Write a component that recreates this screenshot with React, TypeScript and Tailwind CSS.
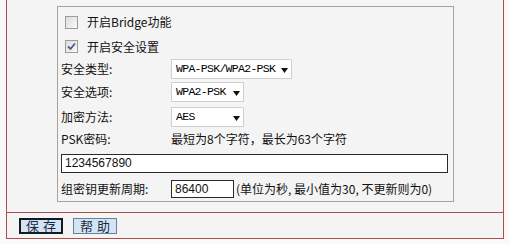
import React from "react";

const cjk = { fontFamily: '"Noto Sans CJK SC", "Noto Sans", sans-serif' };
const mono = { fontFamily: '"Liberation Mono", "DejaVu Sans Mono", monospace' };
const sans = { fontFamily: '"Liberation Sans", Arial, sans-serif' };

function Checkbox({ checked }: { checked?: boolean }) {
  return (
    <div className="w-[13px] h-[13px] border border-[#9c9c9c] bg-gradient-to-br from-[#dcdcdc] to-[#fafafa] flex items-center justify-center shrink-0">
      {checked && (
        <svg width="9" height="9" viewBox="0 0 9 9">
          <path d="M1 4.5 L3.5 7 L8 1.5" stroke="#4a5a8a" strokeWidth="1.8" fill="none" />
        </svg>
      )}
    </div>
  );
}

function Select({ text, width }: { text: string; width: number }) {
  return (
    <div
      className="h-[20px] border border-[#cfcfcf] bg-white flex items-center pl-[4px] pr-[3px] shrink-0"
      style={{ width }}
    >
      <span className="text-[11.5px] tracking-[-0.7px] text-black leading-none whitespace-nowrap" style={mono}>
        {text}
      </span>
      <svg width="7" height="5" viewBox="0 0 7 5" className="mt-[2px] ml-auto shrink-0">
        <path d="M0 0 H7 L3.5 5 Z" fill="#111" />
      </svg>
    </div>
  );
}

export default function App() {
  return (
    <div className="w-[509px] h-[244px] bg-[#fdf8f8] overflow-hidden text-[12px] text-[#111]" style={cjk}>
      <div className="ml-[6px] w-[498px] h-[239px] bg-[#f4f4f4] border-l border-r border-b border-[#a85050] flex flex-col">
        <div className="h-[213px] border-b border-[#a85050] pt-[6px] shrink-0">
          <div className="ml-[50px] w-[397px] h-[196px] border border-[#a3a3a3] flex flex-col pt-[2px]">
            <div className="h-[26px] flex items-center pl-[7px] gap-[9px]">
              <Checkbox />
              <span>开启Bridge功能</span>
            </div>
            <div className="h-[23px] flex items-center pl-[7px] gap-[9px]">
              <Checkbox checked />
              <span>开启安全设置</span>
            </div>
            <div className="h-[22px] flex items-center">
              <div className="w-[113px] pl-[3px] shrink-0">安全类型:</div>
              <Select text="WPA-PSK/WPA2-PSK" width={121} />
            </div>
            <div className="h-[24px] flex items-center">
              <div className="w-[113px] pl-[3px] shrink-0">安全选项:</div>
              <Select text="WPA2-PSK" width={73} />
            </div>
            <div className="h-[26px] flex items-center">
              <div className="w-[113px] pl-[3px] shrink-0">加密方法:</div>
              <Select text="AES" width={73} />
            </div>
            <div className="h-[18px] flex items-center">
              <div className="w-[113px] pl-[3px] shrink-0">PSK密码:</div>
              <span>最短为8个字符，最长为63个字符</span>
            </div>
            <div className="h-[30px] flex items-center pl-[3px]">
              <div className="w-[387px] h-[19px] bg-white border border-[#2a2a2a] flex items-center pl-[3px] text-[12px]" style={sans}>
                1234567890
              </div>
            </div>
            <div className="h-[21px] flex items-center">
              <div className="w-[113px] pl-[3px] shrink-0">组密钥更新周期:</div>
              <div className="w-[63px] h-[18px] bg-white border border-[#2a2a2a] flex items-center pl-[3px] text-[12px] shrink-0" style={sans}>
                86400
              </div>
              <span className="ml-[2px] whitespace-nowrap">(单位为秒, 最小值为30, 不更新则为0)</span>
            </div>
          </div>
        </div>
        <div className="flex-1 flex items-center pl-[12px] gap-[10px]">
          <button className="w-[44px] h-[16px] bg-[#d3e5f5] border-2 border-[#141a22] text-[13px] text-[#1b2a44] flex items-center justify-center tracking-[4px] pl-[4px] leading-none" style={cjk}>
            保存
          </button>
          <button className="w-[44px] h-[16px] bg-[#d3e5f5] border border-[#6d7f96] text-[13px] text-[#1b2a44] flex items-center justify-center tracking-[4px] pl-[4px] leading-none" style={cjk}>
            帮助
          </button>
        </div>
      </div>
    </div>
  );
}
